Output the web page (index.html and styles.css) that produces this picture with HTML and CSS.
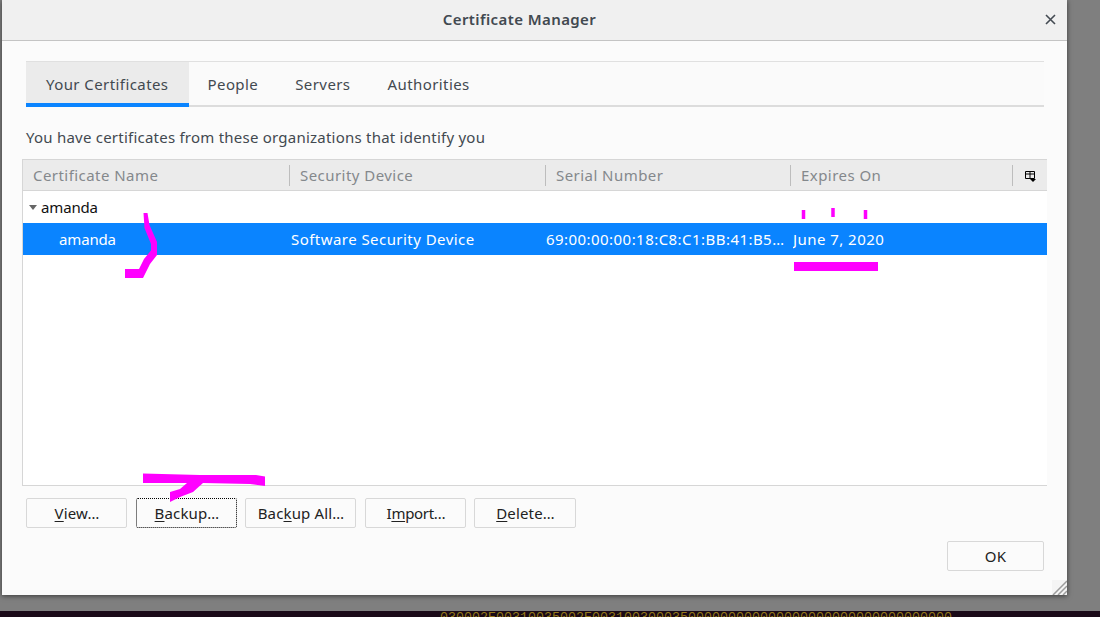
FILE: index.html
```html
<!DOCTYPE html>
<html lang="en">
<head>
    <meta charset="UTF-8">
    <title>Certificate Manager</title>
    <link rel="stylesheet" href="styles.css">
</head>
<body>
    <div class="backdrop">
        <div class="dialog">
            <div class="titlebar">
                <span class="title">Certificate Manager</span>
                <svg class="close" width="11" height="11" viewBox="0 0 11 11"><path d="M1 1L10 10M10 1L1 10" stroke="#444b53" stroke-width="1.6" fill="none"/></svg>
            </div>
            <div class="content">
                <div class="tabs">
                    <div class="tab selected">Your Certificates</div>
                    <div class="tab">People</div>
                    <div class="tab">Servers</div>
                    <div class="tab">Authorities</div>
                </div>
                <p class="desc">You have certificates from these organizations that identify you</p>
                <div class="tree">
                    <div class="tree-head">
                        <div class="col">Certificate Name</div>
                        <div class="col">Security Device</div>
                        <div class="col">Serial Number</div>
                        <div class="col">Expires On</div>
                        <div class="col col-picker">
                            <svg width="11" height="12" viewBox="0 0 11 12"><path d="M0.5 1.5H9.5V8.5H0.5ZM0.5 4H9.5M5 1.5V8.5" stroke="#000" fill="none"/><path d="M5 9H11L8 12Z" fill="#000"/></svg>
                        </div>
                    </div>
                    <div class="row group">
                        <span class="twisty"></span>amanda
                    </div>
                    <div class="row cert">
                        <div class="cell cell-name">amanda</div>
                        <div class="cell">Software Security Device</div>
                        <div class="cell">69:00:00:00:18:C8:C1:BB:41:B5…</div>
                        <div class="cell">June 7, 2020</div>
                    </div>
                </div>
                <div class="actions">
                    <button class="btn btn-view"><u>V</u>iew…</button>
                    <button class="btn btn-view focused"><u>B</u>ackup…</button>
                    <button class="btn btn-all">Bac<u>k</u>up All…</button>
                    <button class="btn btn-view btn-import">I<u>m</u>port…</button>
                    <button class="btn btn-delete"><u>D</u>elete…</button>
                </div>
                <div class="footer">
                    <button class="btn btn-ok">OK</button>
                </div>
            </div>
            <svg class="grip" width="15" height="15" viewBox="0 0 15 15"><path d="M0 0H15V15H0Z" fill="#f4f4f4"/><path d="M1 15L15 1M6 15L15 6M11 15L15 11" stroke="#9c9c9c" stroke-width="1.5" fill="none"/></svg>
        </div>
    </div>
    <div class="terminal">030002E00310035002E003100300035000000000000000000000000000000000</div>

    <!-- marker scribbles drawn on top of the screenshot -->
    <svg class="scribble" width="1100" height="617" viewBox="0 0 1100 617">
        <path d="M143.5 213H147.5L149.5 225L157 242V255L150 264L143 278H125V269H139L144 259L151 250.5V244L144.5 228Z" fill="#ff00ff"/>
        <path d="M143 473.5L200 475L256 475L265 476.5V486L250 484L203 483L193 492L180 497L170 502V492L180 489L187 483L143 483Z" fill="#ff00ff"/>
        <path d="M803.5 210V219M833 208V217M865.5 210V219" stroke="#ff00ff" stroke-width="3.5" fill="none"/>
        <path d="M794 266.5H878" stroke="#ff00ff" stroke-width="9" fill="none"/>
    </svg>
</body>
</html>
```

FILE: styles.css
```css
* {
    box-sizing: border-box;
}
html, body {
    margin: 0;
    height: 100%;
    overflow: hidden;
}
body {
    position: relative;
    width: 1100px;
    height: 617px;
    background: #7f7f7f;
    font-family: 'Noto Sans', 'Open Sans', sans-serif;
    font-size: 15px;
    color: #424950;
}
.backdrop {
    height: 611px;
    padding-left: 2px;
}
.dialog {
    position: relative;
    width: 1065px;
    height: 595px;
    background: #fbfbfb;
    box-shadow: 0 1px 5px rgba(0, 0, 0, 0.55);
}
.titlebar {
    position: relative;
    height: 41px;
    padding: 0 30px 2px 0;
    background: #f0f0f0;
    border-bottom: 1px solid #c4c4c4;
    display: flex;
    justify-content: center;
    align-items: center;
}
.title {
    font-weight: 600;
    font-size: 15px;
    letter-spacing: 0.4px;
    color: #424950;
}
.close {
    position: absolute;
    right: 11px;
    top: 14px;
}
.content {
    padding: 20px 23px 0 24px;
}
.tabs {
    display: flex;
    height: 46px;
    border-top: 1px solid #e0e0e0;
    border-bottom: 2px solid #dcdcdc;
    background: #fafafa;
    letter-spacing: 0.42px;
}
.tab {
    padding: 0 18.5px;
    line-height: 44px;
    height: 44px;
    white-space: nowrap;
}
.tab.selected {
    width: 163px;
    padding: 0 20px;
    height: 45px;
    background: #ebebeb;
    border-bottom: 4px solid #0a84ff;
}
.desc {
    margin: 20px 0 11px;
    line-height: 21px;
    letter-spacing: 0.23px;
}
.tree {
    width: 1025px;
    height: 327px;
    margin-left: -4px;
    background: #fff;
    border: 1px solid #d6d6d6;
    border-right: 0;
}
.tree-head {
    display: grid;
    grid-template-columns: 266px 256px 245px 222px 35px;
    height: 31px;
    background: #ebebeb;
    border-bottom: 1px solid #d6d6d6;
    color: #84888c;
    letter-spacing: 0.45px;
}
.col {
    padding-left: 10px;
    margin: 5px 0 4px;
    line-height: 20px;
    border-left: 1px solid #bdbdbd;
    white-space: nowrap;
}
.col:first-child {
    border-left: 0;
}
.col-picker {
    display: flex;
    align-items: center;
    padding-left: 12px;
}
.row {
    height: 32px;
    line-height: 32px;
    white-space: nowrap;
}
.group {
    display: flex;
    align-items: center;
    color: #111;
    padding-left: 6px;
    letter-spacing: -0.15px;
}
.twisty {
    width: 0;
    height: 0;
    margin-right: 4px;
    border-left: 4px solid transparent;
    border-right: 4px solid transparent;
    border-top: 5px solid #666;
}
.cert {
    display: grid;
    grid-template-columns: 268px 255px 247px 1fr;
    background: #0a84ff;
    color: #fff;
    letter-spacing: 0.45px;
}
.cell {
    overflow: hidden;
}
.cell-name {
    padding-left: 36px;
    letter-spacing: -0.15px;
}
.actions {
    display: flex;
    gap: 9px;
    margin-top: 12px;
}
.btn {
    height: 30px;
    padding: 0 0 0 1px;
    font: inherit;
    letter-spacing: 0.15px;
    color: #222;
    background: #fbfbfb;
    border: 1px solid #d8d8d8;
    border-radius: 2px;
}
.btn u {
    text-underline-offset: 2px;
}
.btn-view {
    width: 101px;
}
.btn-all {
    width: 111px;
}
.btn-import {
    margin-right: -1px;
    letter-spacing: -0.3px;
}
.btn-delete {
    width: 102px;
}
.focused {
    border: 1px dotted #000;
    margin-right: -1px;
}
.footer {
    display: flex;
    justify-content: flex-end;
    margin-top: 13px;
}
.btn-ok {
    width: 97px;
    height: 30px;
    padding: 0;
}
.grip {
    position: absolute;
    right: 0;
    bottom: 0;
}
.terminal {
    height: 6px;
    padding-left: 440px;
    overflow: hidden;
    background: #1a0a18;
    color: #94781a;
    font-family: 'Liberation Mono', monospace;
    font-size: 13.33px;
    line-height: 13px;
    white-space: nowrap;
}
.scribble {
    position: absolute;
    left: 0;
    top: 0;
    pointer-events: none;
}
```
